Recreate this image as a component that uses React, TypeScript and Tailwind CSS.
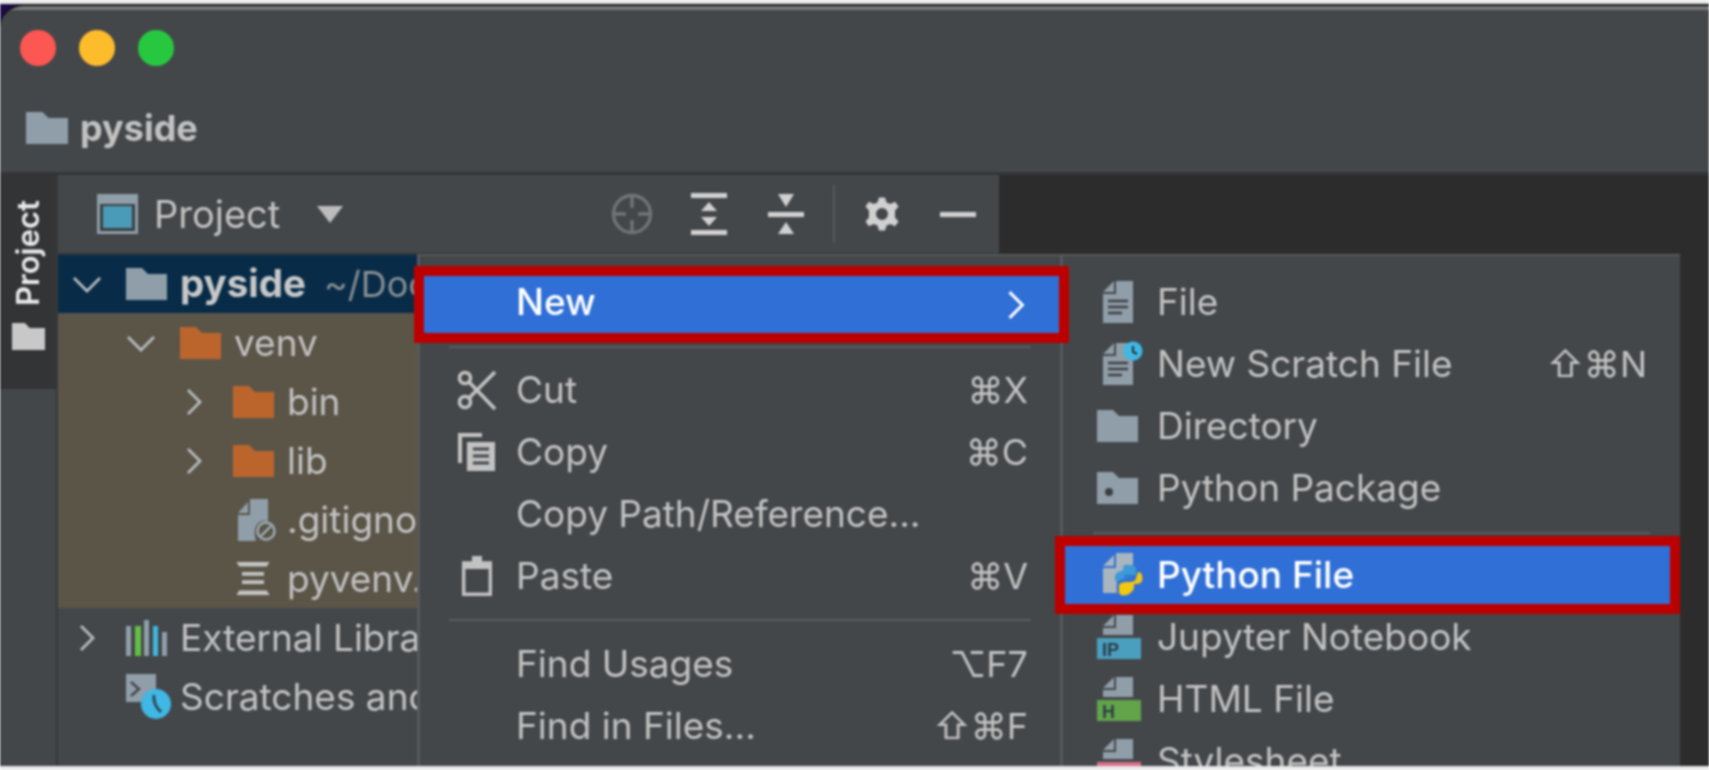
import React from "react";

const F = "#8f9ea8";
const T = "#c2c2c2";
const HINT = { fontFamily: 'Inter, "DejaVu Sans", sans-serif' };

function Folder({ w = 41, h = 32, c = F, dot = false }: { w?: number; h?: number; c?: string; dot?: boolean }) {
  return (
    <svg width={w} height={h} viewBox="0 0 41 32" className="shrink-0" preserveAspectRatio="none">
      <path d="M0 0H16L22 6H41V32H0Z" fill={c} />
      {dot && <circle cx="12" cy="20" r="4" fill="#3c3f41" />}
    </svg>
  );
}

function Chevron({ dir, size = 28, c = "#b8babc" }: { dir: "down" | "right"; size?: number; c?: string }) {
  return (
    <svg width={size} height={size} viewBox="0 0 28 28" className="shrink-0" fill="none" stroke={c} strokeWidth="2.8">
      {dir === "down" ? <path d="M1 8L14 21L27 8" /> : <path d="M8 2L20 14L8 26" />}
    </svg>
  );
}

function FileDoc({ clock = false }: { clock?: boolean }) {
  return (
    <svg width="40" height="46" viewBox="0 0 40 46" className="shrink-0 ml-[6px]">
      <path d="M0 13L11 2V13Z M13 2H30V44H0V15H13Z" fill={F} />
      <path d="M5 22H25M5 28H25M5 34H19" stroke="#3c3f41" strokeWidth="2.4" />
      {clock && (
        <g>
          <circle cx="30" cy="10" r="9.5" fill="#3fb8e6" />
          <path d="M30 5V11L34 13" stroke="#2b2b2b" strokeWidth="2" fill="none" />
        </g>
      )}
    </svg>
  );
}

function TypedFile({ color, label }: { color: string; label: string }) {
  return (
    <svg width="44" height="44" viewBox="0 0 44 44" className="shrink-0">
      <path d="M6 11L17 0V11Z M19 0H36V20H6V13H19Z" fill={F} />
      <rect x="0" y="23" width="44" height="21" fill={color} />
      <text x="5" y="41" fontSize="18" fontWeight="700" fontFamily="Liberation Sans, sans-serif" fill="#2c3e46">{label}</text>
    </svg>
  );
}

function PythonFile() {
  return (
    <svg width="40" height="44" viewBox="0 0 40 44" className="shrink-0 ml-[6px]">
      <path d="M0 13L11 2V13Z M13 0H30V12C20 14 12 22 14 40H0V15H13Z" fill="#a9b6bf" />
      <path d="M22 12C27 11 32 12 33 15V22H21V24H30C28 25 18 25 16 28C12 32 11 24 13 21C15 18 18 18 20 18V15C20 13 21 12 22 12Z" fill="#3d9ad6" />
      <path d="M35 19C39 19 40 24 39 28C38 31 34 31 31 31V34C31 40 20 46 16 40V33C16 30 20 29 24 29C28 29 33 29 33 25Z" fill="#f2c811" />
    </svg>
  );
}

function Scissors() {
  return (
    <svg width="40" height="40" viewBox="0 0 40 40" fill="none" stroke={T} strokeWidth="3.6" className="shrink-0">
      <circle cx="8" cy="8" r="5.5" />
      <circle cx="8" cy="32" r="5.5" />
      <path d="M12 12L38 39M12 28L38 2" />
    </svg>
  );
}

function CopyIcon() {
  return (
    <svg width="37" height="38" viewBox="0 0 37 38" className="shrink-0">
      <path d="M0 0H24V4H4V30H0Z" fill={T} />
      <path d="M9 9H37V38H9Z" fill={T} />
      <path d="M15 16H31M15 23H31M15 30H31" stroke="#44474a" strokeWidth="3" />
    </svg>
  );
}

function PasteIcon() {
  return (
    <svg width="30" height="40" viewBox="0 0 30 40" className="shrink-0" fill="none">
      <path d="M1.7 7H28.3V38.3H1.7Z" stroke={T} strokeWidth="3.4" />
      <path d="M10 0H20V8H10Z" fill={T} />
      <path d="M1 7H29V13H1Z" fill={T} />
    </svg>
  );
}

function MenuRow({ icon, label, hint, iconW = 0 }: { icon?: React.ReactNode; label: string; hint?: string; iconW?: number }) {
  return (
    <div className="h-[62px] flex items-center shrink-0 pr-[32px]">
      <div className="w-[96px] flex items-center shrink-0" style={{ paddingLeft: iconW }}>{icon}</div>
      <span className="flex-1 whitespace-nowrap">{label}</span>
      {hint && <span className="whitespace-nowrap text-[36px]" style={HINT}>{hint}</span>}
    </div>
  );
}

function SubRow({ icon, label, hint }: { icon: React.ReactNode; label: string; hint?: string }) {
  return (
    <div className="h-[62px] flex items-center shrink-0 pr-[33px]">
      <div className="w-[94px] pl-[34px] flex items-center shrink-0">{icon}</div>
      <span className="flex-1 whitespace-nowrap">{label}</span>
      {hint && <span className="whitespace-nowrap text-[36px]" style={HINT}>{hint}</span>}
    </div>
  );
}

function TreeRow({ indent, chevron, icon, children, h = 59 }: { indent: number; chevron?: "down" | "right"; icon: React.ReactNode; children: React.ReactNode; h?: number }) {
  return (
    <div className="flex items-center whitespace-nowrap" style={{ height: h, paddingLeft: indent }}>
      <div className="w-[53px] shrink-0 flex items-center">{chevron && <Chevron dir={chevron} />}</div>
      <div className="w-[54px] shrink-0 flex items-center">{icon}</div>
      <span className="text-[#c2c2c2]">{children}</span>
    </div>
  );
}

export default function App() {
  return (
    <div
      className="w-[1709px] h-[770px] overflow-hidden bg-[#e9e9e9] pt-[4px] pb-[4px] blur-[0.8px]"
      style={{ fontFamily: "Inter, 'Liberation Sans', sans-serif" }}
    >
      <div className="h-[762px] bg-[#1c0b45]">
        <div className="relative h-full flex flex-col bg-[#44474a] rounded-tl-[24px] border-t-[2px] border-[#111111] overflow-hidden">
          <div className="h-[4px] bg-[#77797b] shrink-0" />
          {/* title bar */}
          <div className="h-[162px] shrink-0 flex flex-col pl-[20px]">
            <div className="flex gap-[23px] pt-[20px]">
              <div className="w-[36px] h-[36px] rounded-full bg-[#fc5753]" />
              <div className="w-[36px] h-[36px] rounded-full bg-[#fdbc2c]" />
              <div className="w-[36px] h-[36px] rounded-full bg-[#27c83f]" />
            </div>
            <div className="flex items-center pl-[6px] mt-[42px] gap-[12px] h-[40px]">
              <Folder w={42} h={32} />
              <span className="text-[36px] font-bold text-[#c2c2c2] leading-[40px]">pyside</span>
            </div>
          </div>
          <div className="h-[3px] bg-[#333537] shrink-0" />
          {/* body */}
          <div className="flex-1 flex min-h-0">
            <div className="w-[58px] shrink-0 border-r-[2px] border-[#363839] flex flex-col">
              <div className="h-[214px] bg-[#323436] flex flex-col items-center pt-[25px] gap-[17px]">
                <span className="[writing-mode:vertical-rl] rotate-180 text-[31px] font-semibold text-[#e8e8e8] leading-[32px]">Project</span>
                <Folder w={33} h={27} c="#c8c8c8" />
              </div>
            </div>
            <div className="w-[941px] shrink-0 flex flex-col overflow-hidden text-[37px]">
              {/* project toolbar */}
              <div className="h-[78px] shrink-0 flex items-center text-[#c2c2c2] pr-[23px]">
                <svg width="41" height="40" viewBox="0 0 41 40" className="ml-[39px] shrink-0">
                  <rect x="0" y="0" width="41" height="40" fill={F} />
                  <rect x="3" y="10" width="35" height="27" fill="#3c3f41" />
                  <rect x="6" y="12" width="29" height="22" fill="#4a9bb8" />
                </svg>
                <span className="ml-[16px] text-[38px] leading-none">Project</span>
                <svg width="26" height="17" viewBox="0 0 26 17" className="ml-[37px] shrink-0"><path d="M0 0H26L13 17Z" fill="#bcbcbc" /></svg>
                <div className="ml-auto flex items-center">
                  <svg width="42" height="42" viewBox="0 0 42 42" fill="none" stroke="#717476" strokeWidth="3.4" className="shrink-0">
                    <circle cx="21" cy="21" r="18.5" />
                    <path d="M21 3V15M21 27V39M3 21H15M27 21H39" />
                  </svg>
                  <svg width="36" height="42" viewBox="0 0 36 42" fill="#d0d0d0" className="ml-[38px] shrink-0">
                    <path d="M0 0H36V5H0Z M0 37H36V42H0Z M18 9L26 18H10Z M18 33L10 24H26Z" />
                  </svg>
                  <svg width="36" height="40" viewBox="0 0 36 40" fill="#d0d0d0" className="ml-[41px] shrink-0">
                    <path d="M0 18H36V23H0Z M10 0H26L18 13Z M10 40H26L18 28Z" />
                  </svg>
                  <div className="w-[2px] h-[58px] bg-[#56595b] ml-[29px]" />
                  <svg width="36" height="40" viewBox="0 0 24 24" fill="#d0d0d0" className="ml-[29px] shrink-0">
                    <path fillRule="evenodd" d="M10 1H14L15 4.3L17.6 5.4L20.7 3.8L23 7L20.7 9.6V14.4L23 17L20.7 20.2L17.6 18.6L15 19.7L14 23H10L9 19.7L6.4 18.6L3.3 20.2L1 17L3.3 14.4V9.6L1 7L3.3 3.8L6.4 5.4L9 4.3ZM12 8A4 4 0 1 0 12 16A4 4 0 1 0 12 8Z" />
                  </svg>
                  <div className="w-[36px] h-[5px] bg-[#d0d0d0] ml-[40px]" />
                </div>
              </div>
              <div className="h-[2px] bg-[#333537] shrink-0" />
              {/* tree: only the part left of the context menu is visible */}
              <div className="w-[359px] flex-1 overflow-hidden">
                <div className="bg-[#082c48]">
                  <TreeRow indent={15} chevron="down" icon={<Folder />} h={58}>
                    <b className="font-bold text-[38.5px] text-[#c8c8c8]">pyside</b>
                    <span className="text-[#8a8f93] ml-[18px] text-[36px]">~/Doc</span>
                  </TreeRow>
                </div>
                <div className="bg-[#5b5548]">
                  <TreeRow indent={69} chevron="down" icon={<Folder c="#bb652c" />}>venv</TreeRow>
                  <TreeRow indent={122} chevron="right" icon={<Folder c="#bb652c" />}>bin</TreeRow>
                  <TreeRow indent={122} chevron="right" icon={<Folder c="#bb652c" />}>lib</TreeRow>
                  <TreeRow indent={122} icon={
                    <svg width="38" height="42" viewBox="0 0 38 42" className="ml-[5px]">
                      <path d="M0 14L10 3V14Z M12 0H30V22C20 20 14 28 18 42H0V16H12Z" fill={F} />
                      <circle cx="28" cy="32" r="8.5" fill="none" stroke="#9fb0ba" strokeWidth="2.4" />
                      <path d="M23 37L33 27" stroke="#9fb0ba" strokeWidth="2.4" />
                    </svg>
                  }>.gitigno</TreeRow>
                  <TreeRow indent={122} icon={
                    <svg width="34" height="33" viewBox="0 0 36 36" fill="#c4c4c4" className="ml-[3px]">
                      <path d="M0 0H36L33 5H3Z M6 11H30V15H6Z M6 20H30V24H6Z M3 31H33L36 36H0Z" />
                    </svg>
                  }>pyvenv.</TreeRow>
                </div>
                <TreeRow indent={15} chevron="right" icon={
                  <svg width="41" height="36" viewBox="0 0 41 36">
                    <rect x="0" y="6" width="5" height="30" fill={F} />
                    <rect x="9" y="6" width="6" height="30" fill="#62c043" />
                    <rect x="18" y="0" width="5" height="36" fill={F} />
                    <rect x="27" y="6" width="5" height="30" fill="#40b6e0" />
                    <rect x="36" y="12" width="5" height="24" fill={F} />
                  </svg>
                } h={59}>External Libra</TreeRow>
                <TreeRow indent={15} icon={
                  <svg width="46" height="46" viewBox="0 0 46 46">
                    <path d="M0 0H30V28H0Z" fill={F} />
                    <path d="M5 8L13 15L5 22" fill="none" stroke="#44474a" strokeWidth="2.4" />
                    <circle cx="30" cy="30" r="15" fill="#3fb8e6" />
                    <path d="M28 21C27 27 30 34 35 38" stroke="#2f4a57" strokeWidth="3" fill="none" />
                  </svg>
                } h={59}>Scratches and</TreeRow>
              </div>
            </div>
            <div className="flex-1 bg-[#2c2c2c]" />
          </div>

          {/* context menu */}
          <div className="absolute left-[417px] top-[248px] w-[643px] h-[520px] bg-[#44474a] border-l-[3px] border-t-[2px] border-[#56595b] text-[#c2c2c2] text-[37px] flex flex-col">
            <div className="h-[20px] shrink-0" />
            <div className="relative z-10 h-[57px] ml-[4px] mr-[1px] bg-[#306fd6] outline-[10px] outline-[#bc0000] flex items-center pr-[28px] text-white font-medium shrink-0">
              <span className="ml-[92px] flex-1 pb-[5px]">New</span>
              <Chevron dir="right" size={30} c="#ffffff" />
            </div>
            <div className="h-[26px] shrink-0 flex items-center px-[29px]"><div className="h-[2px] w-full bg-[#5a5d5f] mt-[2px]" /></div>
            <MenuRow icon={<Scissors />} iconW={37} label="Cut" hint="⌘X" />
            <MenuRow icon={<CopyIcon />} iconW={38} label="Copy" hint="⌘C" />
            <MenuRow label="Copy Path/Reference..." />
            <MenuRow icon={<PasteIcon />} iconW={42} label="Paste" hint="⌘V" />
            <div className="h-[26px] shrink-0 flex items-center px-[29px]"><div className="h-[2px] w-full bg-[#5a5d5f]" /></div>
            <MenuRow label="Find Usages" hint="⌥F7" />
            <MenuRow label="Find in Files..." hint="⇧⌘F" />
          </div>

          {/* submenu */}
          <div className="absolute left-[1060px] top-[248px] w-[620px] h-[520px] bg-[#44474a] border-l-[3px] border-t-[2px] border-[#56595b] text-[#c2c2c2] text-[37px] flex flex-col">
            <div className="h-[15px] shrink-0" />
            <SubRow icon={<FileDoc />} label="File" />
            <SubRow icon={<FileDoc clock />} label="New Scratch File" hint="⇧⌘N" />
            <SubRow icon={<Folder />} label="Directory" />
            <SubRow icon={<Folder dot />} label="Python Package" />
            <div className="h-[27px] shrink-0 flex items-center px-[30px]"><div className="h-[2px] w-full bg-[#5a5d5f]" /></div>
            <div className="relative z-10 h-[58px] ml-[2px] mr-[10px] bg-[#306fd6] outline-[10px] outline-[#bc0000] flex items-center text-white font-medium shrink-0">
              <div className="w-[92px] pl-[32px] flex items-center shrink-0"><PythonFile /></div>
              <span>Python File</span>
            </div>
            <div className="h-[2px] shrink-0" />
            <SubRow icon={<TypedFile color="#4a9fbe" label="IP" />} label="Jupyter Notebook" />
            <SubRow icon={<TypedFile color="#62a44a" label="H" />} label="HTML File" />
            <SubRow icon={<TypedFile color="#d9718c" label="" />} label="Stylesheet" />
          </div>
        </div>
      </div>
    </div>
  );
}
